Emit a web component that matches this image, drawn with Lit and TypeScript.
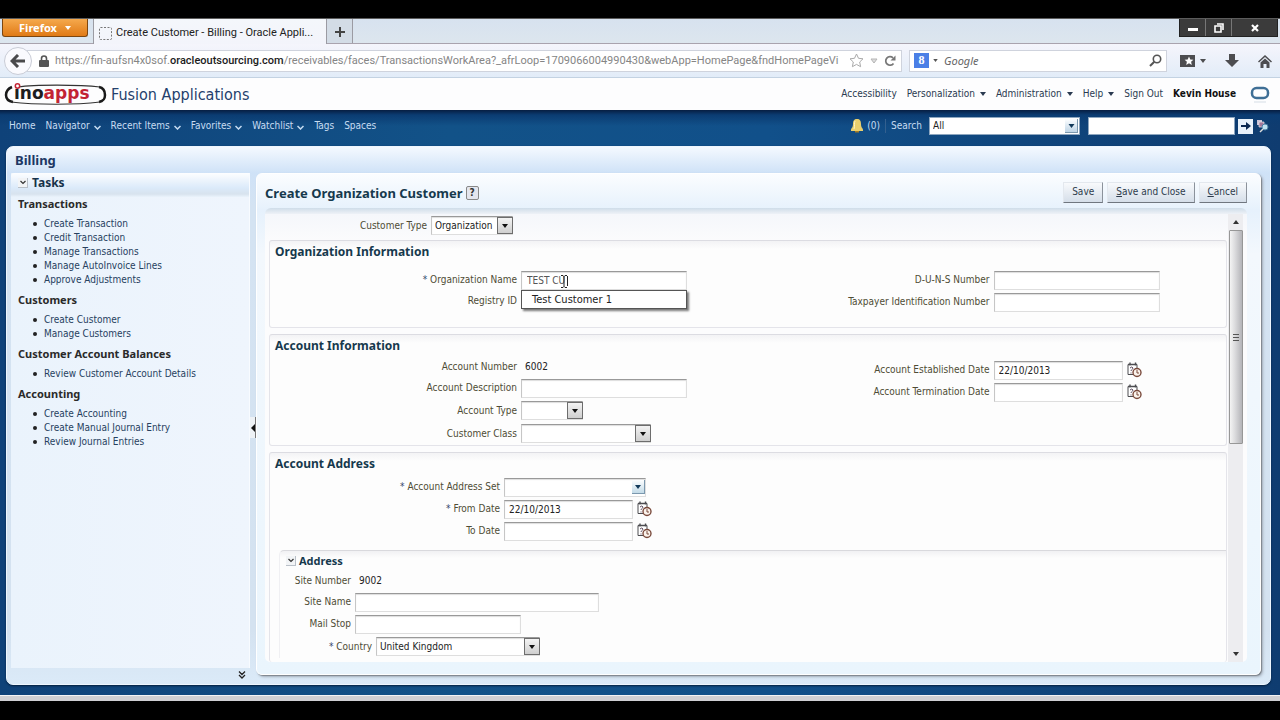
import { LitElement, html, css, nothing } from "lit";
import { customElement } from "lit/decorators.js";

const FONT = css`"DejaVu Sans Condensed", "Noto Sans", sans-serif`;
const HEADING = css`"Noto Sans", "DejaVu Sans Condensed", sans-serif`;

const shared = css`
  *, *::before, *::after { box-sizing: border-box; }
  button, input, select { font: inherit; color: inherit; margin: 0; }
  button { cursor: pointer; }
  a { color: inherit; text-decoration: none; }
  svg { display: block; flex: none; }
  h1, h2, h3, ul, p { margin: 0; padding: 0; font-size: inherit; }
  h2, h3 { font-family: ${HEADING}; }
`;

const caret = (w = 6, h = 4) =>
  html`<svg width=${w} height=${h} viewBox="0 0 6 4" aria-hidden="true"><path d="M0 0h6L3 4z" fill="currentColor" /></svg>`;

@customElement("browser-chrome")
class BrowserChrome extends LitElement {
  static styles = [
    shared,
    css`
      :host { display: block; font-family: Roboto, "Noto Sans", sans-serif; font-size: 11px; line-height: 16px; color: #333; }
      .strip { display: flex; align-items: flex-start; height: 26px; background: linear-gradient(#d7e2ef, #dde6ee); border-top: 1px solid #5c5c5c; padding-left: 2px; box-shadow: inset 0 -1px #a9a3ae; }
      .firefox { display: flex; align-items: center; justify-content: center; gap: 8px; width: 86px; height: 18px; padding: 0; border: 1px solid #7c4610; border-top: 0; border-radius: 0 0 3px 3px; background: linear-gradient(#f5a94d, #e07a16); color: #fff; font-family: ${HEADING}; font-weight: bold; line-height: 14px; }
      .tab { display: flex; align-items: center; gap: 4px; height: 25px; margin-left: 5px; padding: 3px 6px 0 5px; width: 234px; background: linear-gradient(#f4f7fb, #f3f4fb); border: 1px solid #9b9ba3; border-width: 0 1px; white-space: nowrap; color: #222; }
      .plus { display: grid; place-items: center; width: 26px; height: 24px; padding: 2px 0 0; border: 1px solid #9b9ba3; border-width: 0 1px 0 0; background: #d3dce6; color: #444; }
      .controls { display: flex; margin-left: auto; margin-right: 2px; border: 1px solid #222; border-top: 0; }
      .controls button { display: grid; place-items: center; width: 26px; height: 17px; padding: 0; border: 0; border-right: 1px solid #777; background: #3b3b3b; color: #fff; }
      .controls button:last-child { width: 45px; border-right: 0; }
      .bar { display: flex; align-items: center; height: 34px; padding: 0 8px 0 4px; background: linear-gradient(#f5f5fc, #e2ecf8); border-bottom: 1px solid #c3d2e2; }
      .back { display: grid; place-items: center; width: 28px; height: 28px; padding: 0; border: 1px solid #c9ccd6; border-radius: 50%; background: #fafafe; color: #4a4a4c; z-index: 1; }
      .box { display: flex; align-items: center; height: 22px; background: #fff; border: 1px solid #cfd3dd; }
      .url { flex: 1; min-width: 0; padding: 0 5px 0 11px; margin-left: -5px; gap: 6px; }
      .address { flex: 1; overflow: hidden; white-space: nowrap; color: #858585; }
      .address b { font-weight: 500; color: #1c1c1c; }
      .find { width: 258px; margin-left: 7px; padding: 0 4px; gap: 4px; color: #555; }
      .find input { flex: 1; min-width: 0; border: 0; padding: 0 0 0 2px; background: none; font-family: ${HEADING}; font-style: italic; outline: 0; }
      .find input::placeholder { color: #666; opacity: 1; }
      .g { width: 15px; height: 15px; background: #4a7fe6; color: #fff; text-align: center; font: bold 12px/14px "Liberation Serif", serif; }
      .tools { display: flex; align-items: center; gap: 19px; margin-left: 13px; color: #4d4d50; }
      .tools button { display: flex; align-items: center; gap: 5px; border: 0; padding: 0; background: none; color: inherit; }
    `,
  ];
  render() {
    return html`
      <div class="strip">
        <button class="firefox">Firefox ${caret()}</button>
        <div class="tab">
          <svg width="13" height="13" viewBox="0 0 13 13"><rect x=".5" y=".5" width="12" height="12" rx="1" fill="none" stroke="#777" stroke-dasharray="2 1.5" /></svg>
          <span>Create Customer - Billing - Oracle Appli...</span>
        </div>
        <button class="plus" aria-label="New tab"><svg width="10" height="10" viewBox="0 0 10 10"><path d="M4 0h2v4h4v2H6v4H4V6H0V4h4z" fill="currentColor" /></svg></button>
        <div class="controls">
          <button aria-label="Minimize"><svg width="10" height="8" viewBox="0 0 10 8"><path d="M0 4h10v3H0z" fill="#fff" /></svg></button>
          <button aria-label="Restore"><svg width="10" height="10" viewBox="0 0 10 10"><path d="M3 1h6v6M1 3h6v6H1z" fill="none" stroke="#fff" stroke-width="1.6" /></svg></button>
          <button aria-label="Close"><svg width="8" height="8" viewBox="0 0 8 8"><path d="M1 1l6 6M7 1L1 7" stroke="#fff" stroke-width="2.2" /></svg></button>
        </div>
      </div>
      <div class="bar">
        <button class="back" aria-label="Back"><svg width="16" height="14" viewBox="0 0 16 14"><path d="M8 1L2 7l6 6M3 7h12" fill="none" stroke="currentColor" stroke-width="3" /></svg></button>
        <div class="box url">
          <svg width="10" height="12" viewBox="0 0 10 12"><path d="M2.5 6V3.5a2.5 2.5 0 015 0V6" fill="none" stroke="#555" stroke-width="1.6" /><rect y="5" width="10" height="7" rx="1" fill="#555" /></svg>
          <div class="address" role="textbox" aria-label="Address">https://fin-aufsn4x0sof.<b>oracleoutsourcing.com</b>/receivables/faces/TransactionsWorkArea?_afrLoop=1709066004990430&amp;webApp=HomePage&amp;fndHomePageVi</div>
          <svg width="15" height="15" viewBox="0 0 15 15"><path d="M7.500 1l2 4.300 4.500.5-3.300 3.200.9 4.700-4.100-2.300-4.100 2.300.9-4.700L1 5.800l4.500-.5z" fill="none" stroke="#aaa" /></svg>
          <svg width="8" height="6" viewBox="0 0 8 6"><path d="M1 1h6L4 5z" fill="#ddd" stroke="#b5b5b5" /></svg>
          <svg width="12" height="12" viewBox="0 0 12 12"><path d="M9.500 8.500A4.300 4.300 0 119 2.800" fill="none" stroke="#777" stroke-width="1.700" /><path d="M6.500 5.500h5V.5z" fill="#777" /></svg>
        </div>
        <div class="box find">
          <span class="g" aria-hidden="true">8</span>${caret(5, 3)}
          <input type="search" aria-label="Search the web" placeholder="Google" />
          <svg width="13" height="13" viewBox="0 0 13 13"><circle cx="8" cy="5" r="3.700" fill="none" stroke="currentColor" stroke-width="1.600" /><path d="M5.300 7.700L1 12" stroke="currentColor" stroke-width="2" /></svg>
        </div>
        <div class="tools">
          <button aria-label="Bookmarks"><svg width="15" height="13" viewBox="0 0 15 13"><path d="M0 1h15v12H0z" fill="currentColor" /><path d="M9 2.500l1.300 2.900 3.100.3-2.300 2.100.7 3.100L9 9.300l-2.800 1.600.7-3.100-2.300-2.100 3.100-.3z" fill="#fff" /></svg>${caret()}</button>
          <button aria-label="Downloads"><svg width="14" height="14" viewBox="0 0 14 14"><path d="M4 0h6v6h4l-7 7-7-7h4z" fill="currentColor" /></svg></button>
          <button aria-label="Homepage"><svg width="14" height="14" viewBox="0 0 14 14"><path d="M7 1l7 6.500-1 1-6-5.500-6 5.500-1-1z" fill="currentColor" /><path d="M2.500 8.500L7 4.500l4.500 4V14H8.500v-4h-3v4h-3z" fill="currentColor" /></svg></button>
        </div>
      </div>`;
  }
}

@customElement("app-header")
class AppHeader extends LitElement {
  static styles = [
    shared,
    css`
      :host { display: block; font-family: ${FONT}; font-size: 10px; line-height: 14px; }
      .brand { display: flex; align-items: center; height: 32px; padding: 0 10px 0 4px; background: #fdfdfe; color: #2a3a50; white-space: nowrap; }
      .brand > svg { margin-top: 2px; }
      .name { margin: 2px 0 0 4px; font-size: 16px; line-height: 20px; font-weight: normal; color: #24406c; }
      .links { display: flex; align-items: center; gap: 10px; margin-left: auto; }
      .links a, .links button { display: flex; align-items: center; gap: 5px; border: 0; padding: 0; background: none; }
      .user { margin-right: 4px; color: #111; font-weight: bold; }
      .nav { display: flex; align-items: center; height: 36px; padding: 0 11px 4px 9px; background: linear-gradient(#071e42, #0b3c72 5px, transparent 16px); color: #c7dcf2; white-space: nowrap; }
      .menu { display: flex; gap: 10px; }
      .menu button, .menu a { display: flex; align-items: center; gap: 4px; border: 0; padding: 0; background: none; }
      .menu svg { margin-top: 3px; }
      .right { display: flex; align-items: center; margin-left: auto; }
      .right .count { margin: 0 5px 0 4px; padding-right: 5px; border-right: 1px solid #33608f; }
      .pick { display: grid; align-items: center; margin: 0 8px 0 7px; }
      .pick > * { grid-area: 1 / 1; }
      .pick select { width: 151px; height: 18px; padding: 0 3px; border: 1px solid #8da6bf; border-radius: 0; background: #fff; color: #222; appearance: none; }
      .drop { display: grid; place-items: center; justify-self: end; width: 13px; height: 14px; margin-right: 2px; background: linear-gradient(#fdfeff, #bfd5e6); border-right: 1px solid #7b98ae; border-bottom: 1px solid #7b98ae; color: #123a5a; pointer-events: none; }
      .right input { width: 147px; height: 18px; border: 1px solid #8da6bf; background: #fff; color: #222; padding: 0 4px; }
      .go { display: grid; place-items: center; width: 15px; height: 15px; margin: 0 3px; padding: 0; border: 0; background: #e9f2fb; color: #0b2850; }
      .adv { padding: 0; border: 0; background: none; }
    `,
  ];
  render() {
    const chev = html`<svg width="7" height="5" viewBox="0 0 7 5"><path d="M.5 1l3 3 3-3" fill="none" stroke="currentColor" stroke-width="1.500" /></svg>`;
    return html`
      <header class="brand">
        <svg width="103" height="24" viewBox="0 0 103 24" role="img" aria-label="inoapps">
          <path d="M8 4C3 6 2 9 2 12s1 6 7 7M95 4c5 1 6 4 6 8s-1 6-6 7" fill="none" stroke="#1a1a1a" stroke-width="2.500" />
          <path d="M14 4C30 1.500 75 1.500 96 4M7 19c25 3 65 3 89 0" fill="none" stroke="#333" stroke-width="1.200" />
          <circle cx="13.500" cy="3" r="2.200" fill="#fff" stroke="#c22334" stroke-width="1.500" />
          <text x="10" y="16" font-family="DejaVu Sans" font-weight="bold" font-size="17" fill="#1d1d1f">ıno<tspan fill="#c22334">apps</tspan></text>
        </svg>
        <h1 class="name">Fusion Applications</h1>
        <nav class="links">
          <a href="#">Accessibility</a>
          <button>Personalization ${caret()}</button>
          <button>Administration ${caret()}</button>
          <button>Help ${caret()}</button>
          <a href="#">Sign Out</a>
          <span class="user">Kevin House</span>
          <svg width="20" height="18" viewBox="0 0 20 18"><rect x="2" y="3" width="16" height="10" rx="4.500" fill="none" stroke="#3f6f96" stroke-width="2.500" /><path d="M4 17h12" stroke="#d5dde5" /></svg>
        </nav>
      </header>
      <div class="nav">
        <nav class="menu">
          <a href="#">Home</a>
          <button>Navigator ${chev}</button>
          <button>Recent Items ${chev}</button>
          <button>Favorites ${chev}</button>
          <button>Watchlist ${chev}</button>
          <a href="#">Tags</a>
          <a href="#">Spaces</a>
        </nav>
        <div class="right">
          <svg width="12" height="14" viewBox="0 0 12 14"><path d="M6 0c3 0 4 2 4 5 0 4 2 4 2 6v1H0v-1c0-2 2-2 2-6 0-3 1-5 4-5z" fill="#e9cf6d" /><path d="M4 12h4v1.500H4z" fill="#a57c24" /><path d="M4 2c-1 2 0 5-1 8" stroke="#fff6c8" fill="none" /></svg>
          <span class="count">(0)</span>
          <label for="scope">Search</label>
          <span class="pick"><select id="scope"><option>All</option></select><span class="drop">${caret(7, 4)}</span></span>
          <input type="text" aria-label="Search text" />
          <button class="go" aria-label="Go"><svg width="10" height="8" viewBox="0 0 10 8"><path d="M0 3h5V0l5 4-5 4V5H0z" fill="currentColor" /></svg></button>
          <button class="adv" aria-label="Advanced search"><svg width="13" height="14" viewBox="0 0 13 14"><path d="M1 1h5v5H1z" fill="#c9c3d8" /><path d="M3 3h5v5H3z" fill="#a3779b" stroke="#eee" stroke-width=".7" /><circle cx="9" cy="8" r="3" fill="#bfe2f2" stroke="#4b7fa6" /><path d="M7 10l-3 3" stroke="#ddd" stroke-width="1.500" /></svg></button>
        </div>
      </div>`;
  }
}

const TASKS = [
  { title: "Transactions", items: ["Create Transaction", "Credit Transaction", "Manage Transactions", "Manage AutoInvoice Lines", "Approve Adjustments"] },
  { title: "Customers", items: ["Create Customer", "Manage Customers"] },
  { title: "Customer Account Balances", items: ["Review Customer Account Details"] },
  { title: "Accounting", items: ["Create Accounting", "Create Manual Journal Entry", "Review Journal Entries"] },
];

const disclose = css`
  .disclose { display: grid; place-items: center; width: 10px; height: 10px; padding: 0; border: 1px solid #b9c0c8; border-width: 0 1px 1px 0; background: #f2f4f6; color: #333; }
`;
const discloseIcon = html`<svg width="6" height="5" viewBox="0 0 6 5"><path d="M.5 1L3 3.500 5.500 1" fill="none" stroke="currentColor" stroke-width="1.200" /></svg>`;

@customElement("task-pane")
class TaskPane extends LitElement {
  static styles = [
    shared,
    disclose,
    css`
      :host { display: flex; flex-direction: column; font-family: ${FONT}; font-size: 10px; line-height: 14px; }
      .body { flex: 1; background: linear-gradient(90deg, #eaf3fc, #eff5fd); border-right: 1px solid #f8fbff; }
      .head { display: flex; align-items: center; gap: 4px; height: 24px; padding: 0 7px 4px; background: linear-gradient(#fdfeff, #dbeafa 15px, #d8e3ee 21px, #eaf3fc); border-radius: 3px 0 0; color: #16324a; }
      .head h2 { font-size: 12px; }
      h3 { padding-left: 7px; margin-bottom: 6px; color: #2a2a2a; font-size: 11px; }
      ul { list-style: none; margin-bottom: 6px; color: #27415f; }
      li { display: flex; align-items: center; gap: 7px; padding-left: 22px; }
      li::before { content: ""; width: 4px; height: 4px; border-radius: 50%; background: #222; }
      .foot { display: flex; justify-content: flex-end; height: 14px; padding: 3px 4px 0; }
      .more { border: 0; padding: 0; background: none; color: #222; height: 8px; }
    `,
  ];
  render() {
    return html`
      <div class="body">
        <div class="head"><button class="disclose" aria-label="Collapse Tasks">${discloseIcon}</button><h2>Tasks</h2></div>
        ${TASKS.map((g) => html`<h3>${g.title}</h3><ul>${g.items.map((i) => html`<li><a href="#">${i}</a></li>`)}</ul>`)}
      </div>
      <div class="foot"><button class="more" aria-label="More panels"><svg width="8" height="8" viewBox="0 0 8 8"><path d="M1 .5l3 3 3-3M1 4l3 3 3-3" fill="none" stroke="currentColor" stroke-width="1.300" /></svg></button></div>`;
  }
}

type Field = { label: string; kind: "text" | "date" | "select" | "lov" | "static"; size?: string; value?: string; required?: boolean; suggest?: string; shift?: boolean };

@customElement("customer-form")
class CustomerForm extends LitElement {
  static styles = [
    shared,
    disclose,
    css`
      :host { display: flex; flex-direction: column; font-family: ${FONT}; font-size: 10px; line-height: 14px; color: #222; background: linear-gradient(#fbfdff, #e6f1fc 36px, #f3f8fd 80px, #eaf5fd); border: 1px solid #fff; border-radius: 6px; box-shadow: 1px 1px 1px #7f858c, 2px 2px 3px #a8b2bf; padding: 0 13px 12px 8px; }
      .top { display: flex; align-items: center; height: 34px; padding-top: 4px; }
      .top h2 { font-size: 13px; line-height: 18px; color: #16394d; }
      .help { display: grid; place-items: center; width: 13px; height: 14px; margin-left: 3px; padding: 0; border: 1px solid #888; border-radius: 2px; background: #e4e6ee; color: #333; font-weight: bold; line-height: 12px; }
      .actions { display: flex; gap: 4px; margin: 0 0 2px auto; }
      .actions button { height: 21px; padding: 0 8px; border: 1px solid #e3e8ee; border-right-color: #8b929b; border-bottom-color: #6f767f; background: linear-gradient(#f8fafc, #d5dee9); color: #2d3b4c; }
      .rule { height: 6px; border-radius: 6px 6px 0 0; background: linear-gradient(#cfdde9, #eef2f7); }
      .pane { display: flex; flex: 1; padding-right: 4px; background: linear-gradient(#f5f7fb, #fcfcfd 30px); border-radius: 0 0 5px 5px; }
      .content { flex: 1; min-width: 0; display: flex; flex-direction: column; padding-left: 4px; }
      .section { border: 1px solid #e4e4ea; border-top-color: #dcdce2; border-radius: 3px; background: linear-gradient(#f3f3f5, #fdfdfd 8px); padding: 0 6px 0 5px; margin-bottom: 6px; }
      .section.last { flex: 1; border-bottom: 0; margin-bottom: 0; padding-right: 0; }
      .section > h3 { height: 22px; line-height: 22px; font-size: 12px; color: #16394d; }
      .cols { display: grid; grid-template-columns: 1fr 1fr; }
      .roomy { padding: 6px 0 14px; }
      .snug .side { padding-top: 2px; }
      .row { display: flex; align-items: center; gap: 4px; min-height: 22px; }
      .row.static { min-height: 20px; }
      .row.select { min-height: 23px; }
      .row label, .row .caption { width: 242px; text-align: right; color: #4e4c35; white-space: nowrap; }
      .near { padding-top: 1px; }
      .near .row label { width: 225px; }
      .inner .row label, .inner .row .caption { width: 65px; }
      .inner .row.shift label { width: 86px; }
      .type { padding-bottom: 3px; }
      .type .row label { width: 158px; }
      .star { color: #33466b; }
      .value { padding-left: 4px; }
      .hold { position: relative; display: grid; align-items: center; }
      .hold > .in, .hold > .btn { grid-area: 1 / 1; }
      .in { width: 166px; height: 19px; padding: 0 4px; border: 1px solid #c6c6c6; border-top-color: #999; border-right-color: #dedede; border-bottom-color: #dedede; border-radius: 0; background: #fff; box-shadow: inset 0 1px 1px #ddd; outline: 0; }
      select.in { appearance: none; padding: 0 3px; }
      .in.typed { padding-left: 5px; color: #555; }
      .w-date { width: 129px; }
      .w-wide { width: 244px; }
      .w-type { width: 62px; }
      .w-class { width: 130px; }
      .w-org { width: 82px; }
      .w-country { width: 164px; }
      .w-lov { width: 142px; }
      .btn { display: grid; place-items: center; justify-self: end; width: 16px; height: 17px; border: 1px solid #6d6d6d; background: linear-gradient(#f3f3f3, #cfcfcf); color: #111; pointer-events: none; }
      .lov .btn { width: 13px; height: 14px; margin-right: 1px; border: 0; border-right: 1px solid #7b98ae; border-bottom: 1px solid #7b98ae; background: linear-gradient(#fdfeff, #c3dbe8); color: #123a5a; }
      .cal { border: 0; padding: 0; background: none; }
      .suggest { position: absolute; z-index: 2; top: 100%; left: 0; right: 0; height: 19px; padding: 1px 10px; border: 1px solid #555; background: #fff; box-shadow: 2px 2px 2px #777; font-size: 11px; line-height: 15px; color: #222; white-space: nowrap; }
      .beam { position: absolute; z-index: 3; left: 39px; top: 4px; }
      .inner { margin: 8px 0 0 4px; padding: 0 0 0 6px; border-top: 1px solid #d9d9dd; border-left: 1px solid #f0f0f3; border-radius: 5px 0 0; background: linear-gradient(#f1f1f3, #fdfdfd 7px); }
      .inner .head { display: flex; align-items: center; gap: 3px; height: 20px; }
      .inner h3 { font-size: 11px; color: #16394d; }
      .scroll { display: flex; flex-direction: column; align-items: center; width: 15px; margin-left: 1px; background: #ededf0; color: #333; }
      .scroll i { display: grid; place-items: center; width: 15px; height: 16px; }
      .thumb { display: grid; place-items: center; width: 14px; height: 214px; border: 1px solid #979797; border-radius: 1px; background: linear-gradient(90deg, #f4f4f4, #dcdcde 40%, #b4b4b8); }
      .scroll i:last-child { margin-top: auto; }
    `,
  ];

  private n = 0;

  private field(f: Field) {
    const id = `f${this.n++}`;
    const cap = html`${f.required ? html`<span class="star">* </span>` : nothing}${f.label}`;
    if (f.kind === "static") return html`<div class="row static"><span class="caption">${cap}</span><span class="value">${f.value}</span></div>`;
    const w = f.size ? `w-${f.size}` : f.kind === "date" ? "w-date" : "";
    const control =
      f.kind === "select" || f.kind === "lov"
        ? html`<select id=${id} class="in ${w}"><option>${f.value ?? ""}</option></select><span class="btn">${caret(8, 4)}</span>`
        : html`<input id=${id} type="text" class="in ${w} ${f.suggest ? "typed" : ""}" .value=${f.value ?? ""} />`;
    return html`<div class="row ${f.kind} ${f.shift ? "shift" : ""}">
      <label for=${id}>${cap}</label>
      <span class="hold">${control}${f.suggest
        ? html`<span class="suggest" role="listbox"><span role="option">${f.suggest}</span></span>
            <svg class="beam" width="8" height="13" viewBox="0 0 8 13"><path d="M1 .5h2l1 1 1-1h2M4 1.500v10M1 12.500h2l1-1 1 1h2M7.500 1v10" fill="none" stroke="#222" /></svg>`
        : nothing}</span>
      ${f.kind === "date" ? html`<button class="cal" aria-label="Select date"><svg width="15" height="16" viewBox="0 0 15 16"><path d="M1 2.500h9v10H1z" fill="#fff" stroke="#4c4c50" /><path d="M1 2.500h9M3 .5v3M8.500 .5v3" stroke="#4c4c50" stroke-width="1.400" /><path d="M3 6q2-2 3 0c0 1.500-2 1.500-2 3M4 10.500v1" stroke="#5b4a5e" fill="none" /><circle cx="10" cy="10.500" r="4" fill="#fbf3ec" stroke="#7a4a3c" stroke-width="1.400" /><path d="M10 8v3h2" stroke="#7a4a3c" fill="none" /></svg></button>` : nothing}
    </div>`;
  }

  render() {
    this.n = 0;
    const f = (x: Field) => this.field(x);
    return html`
      <div class="top">
        <h2>Create Organization Customer</h2><button class="help" aria-label="Help">?</button>
        <div class="actions"><button>Save</button><button><u>S</u>ave and Close</button><button><u>C</u>ancel</button></div>
      </div>
      <div class="rule"></div>
      <div class="pane">
        <div class="content">
          <div class="type">${f({ label: "Customer Type", kind: "select", size: "org", value: "Organization" })}</div>
          <section class="section">
            <h3>Organization Information</h3>
            <div class="cols roomy">
              <div>
                ${f({ label: "Organization Name", kind: "text", required: true, value: "TEST CU", suggest: "Test Customer 1" })}
                ${f({ label: "Registry ID", kind: "static" })}
              </div>
              <div>
                ${f({ label: "D-U-N-S Number", kind: "text" })}
                ${f({ label: "Taxpayer Identification Number", kind: "text" })}
              </div>
            </div>
          </section>
          <section class="section">
            <h3>Account Information</h3>
            <div class="cols snug">
              <div>
                ${f({ label: "Account Number", kind: "static", value: "6002" })}
                ${f({ label: "Account Description", kind: "text" })}
                ${f({ label: "Account Type", kind: "select", size: "type" })}
                ${f({ label: "Customer Class", kind: "select", size: "class" })}
              </div>
              <div class="side">
                ${f({ label: "Account Established Date", kind: "date", value: "22/10/2013" })}
                ${f({ label: "Account Termination Date", kind: "date" })}
              </div>
            </div>
          </section>
          <section class="section last">
            <h3>Account Address</h3>
            <div class="near">
              ${f({ label: "Account Address Set", kind: "lov", size: "lov", required: true })}
              ${f({ label: "From Date", kind: "date", required: true, value: "22/10/2013" })}
              ${f({ label: "To Date", kind: "date" })}
            </div>
            <div class="inner">
              <div class="head"><button class="disclose" aria-label="Collapse Address">${discloseIcon}</button><h3>Address</h3></div>
              ${f({ label: "Site Number", kind: "static", value: "9002" })}
              ${f({ label: "Site Name", kind: "text", size: "wide" })}
              ${f({ label: "Mail Stop", kind: "text" })}
              ${f({ label: "Country", kind: "select", size: "country", required: true, value: "United Kingdom", shift: true })}
            </div>
          </section>
        </div>
        <div class="scroll" aria-hidden="true">
          <i><svg width="6" height="4" viewBox="0 0 6 4"><path d="M0 4h6L3 0z" fill="currentColor" /></svg></i>
          <div class="thumb"><svg width="6" height="7" viewBox="0 0 6 7"><path d="M0 .5h6M0 3.500h6M0 6.500h6" stroke="#555" /></svg></div>
          <i>${caret()}</i>
        </div>
      </div>`;
  }
}

@customElement("app-root")
class AppRoot extends LitElement {
  static styles = [
    shared,
    css`
      :host { display: flex; flex-direction: column; min-height: 100vh; box-sizing: border-box; padding: 18px 0 19px; background: #000; font-family: ${FONT}; }
      .page { display: flex; flex-direction: column; flex: 1; background: linear-gradient(90deg, #0f4279, #125288 35%, #11508a 60%, #0f3c70); }
      .frame { display: flex; flex-direction: column; flex: 1; margin: 0 9px 10px 6px; padding: 0 9px 2px 4px; background: linear-gradient(#f4f9ff, #cfe2f7 26px, #d4e3f2 60px, #d4e2f0 90%, #dbeaf8); border: 1px solid #eef6fe; border-radius: 7px; box-shadow: 0 1px 2px #05203f; }
      .frame > h2 { height: 26px; padding: 2px 0 0 4px; font-size: 13px; line-height: 22px; color: #1c3763; }
      .cols { display: flex; flex: 1; }
      .tasks { width: 239px; }
      .split { display: flex; align-items: center; width: 6px; }
      .split button { display: grid; place-items: center; width: 6px; height: 21px; padding: 0; border: 0; border-right: 1px solid #777; background: #eef2f6; color: #111; }
      .form { flex: 1; min-width: 0; margin-bottom: 7px; }
      .status { height: 6px; background: #cfcfd3; border-top: 1px solid #f3f3f5; }
    `,
  ];
  render() {
    return html`
      <browser-chrome></browser-chrome>
      <div class="page">
        <app-header></app-header>
        <main class="frame">
          <h2>Billing</h2>
          <div class="cols">
            <task-pane class="tasks"></task-pane>
            <div class="split"><button aria-label="Collapse pane"><svg width="4" height="8" viewBox="0 0 4 8"><path d="M4 0v8L0 4z" fill="currentColor" /></svg></button></div>
            <customer-form class="form"></customer-form>
          </div>
        </main>
        <div class="status"></div>
      </div>`;
  }
}
